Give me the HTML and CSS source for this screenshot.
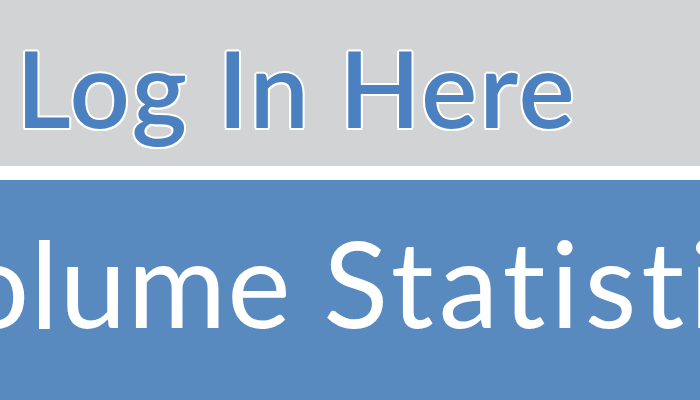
FILE: index.html
```html
<!DOCTYPE html>
<html>
<head>
<meta charset="utf-8">
<link rel="stylesheet" href="styles.css">
</head>
<body>
<div class="page">
  <header class="login-bar">
    <h1 class="login-title">Log In Here</h1>
  </header>
  <div class="divider"></div>
  <section class="stats-bar">
    <h2 class="stats-title">Volume <span class="stats-word">Statistics</span></h2>
  </section>
</div>
</body>
</html>
```
FILE: styles.css
```css
html, body {
  margin: 0;
  padding: 0;
}
body {
  width: 700px;
  height: 400px;
  overflow: hidden;
  background: #ffffff;
}
.page {
  display: flex;
  flex-direction: column;
  width: 700px;
  height: 400px;
  overflow: hidden;
}
.login-bar {
  height: 166px;
  flex: none;
  background: #d2d3d5;
  display: flex;
  align-items: flex-start;
  overflow: hidden;
}
.login-title {
  margin: 34px 0 0 16px;
  font-family: Lato, "Open Sans", sans-serif;
  font-weight: 600;
  font-size: 106px;
  line-height: 1;
  letter-spacing: 2px;
  color: #4b80c1;
  white-space: nowrap;
  font-variant-ligatures: none;
  font-feature-settings: "liga" 0, "dlig" 0, "clig" 0;
  text-shadow:
    2px 0 0 #fff, -2px 0 0 #fff, 0 2px 0 #fff, 0 -2px 0 #fff,
    1.5px 1.5px 0 #fff, -1.5px 1.5px 0 #fff, 1.5px -1.5px 0 #fff, -1.5px -1.5px 0 #fff;
}
.divider {
  height: 14px;
  flex: none;
  background: #ffffff;
}
.stats-bar {
  flex: 1;
  background: #5889bf;
  overflow: hidden;
  display: flex;
  align-items: flex-start;
}
.stats-title {
  margin: 42px 0 0 -112px;
  white-space: nowrap;
  font-family: Lato, "Open Sans", sans-serif;
  font-weight: 400;
  font-size: 120px;
  line-height: 1;
  letter-spacing: 1px;
  color: #ffffff;
  font-variant-ligatures: none;
  font-feature-settings: "liga" 0, "dlig" 0, "clig" 0;
}
.stats-word {
  letter-spacing: 5px;
}
```
